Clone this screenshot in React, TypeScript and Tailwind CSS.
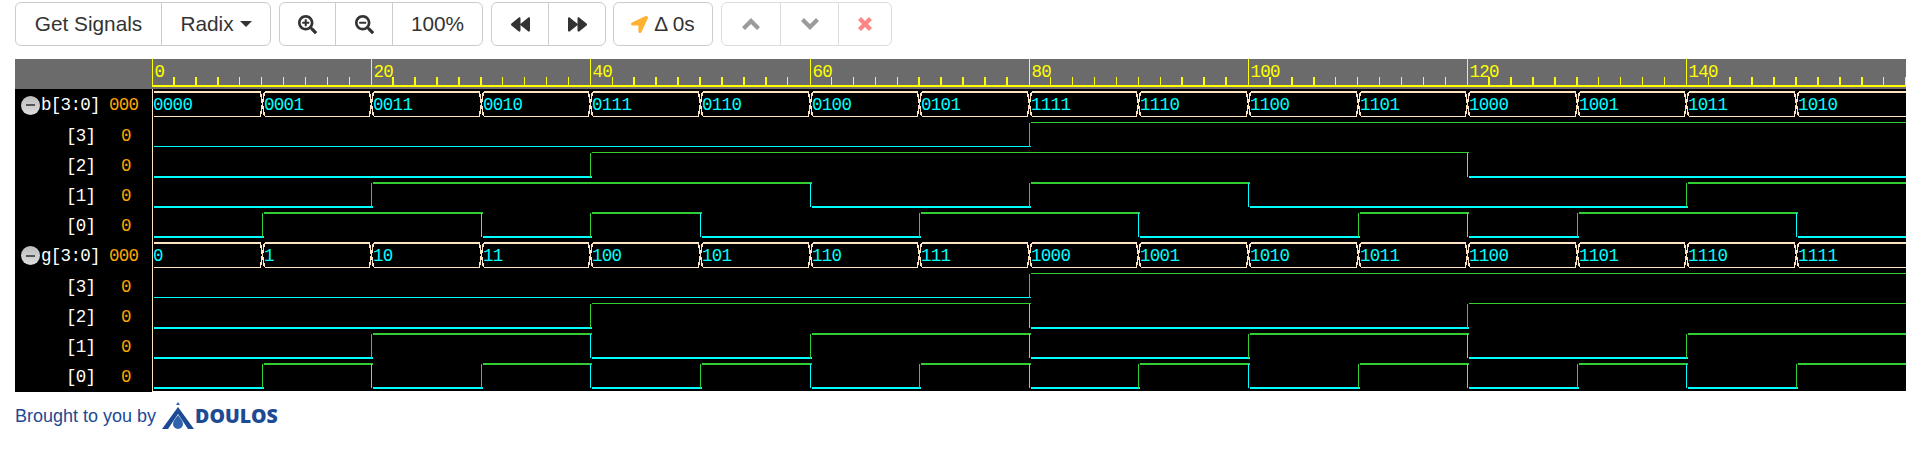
import { FaSearchPlus, FaSearchMinus, FaBackward, FaForward, FaLocationArrow } from "react-icons/fa";

const tx = (t: number) => Math.round(152 + t * 10.96) + 0.5;
const MONO = '"Liberation Mono", monospace';

const bVals = ["0000", "0001", "0011", "0010", "0111", "0110", "0100", "0101", "1111", "1110", "1100", "1101", "1000", "1001", "1011", "1010"];
const gVals = ["0", "1", "10", "11", "100", "101", "110", "111", "1000", "1001", "1010", "1011", "1100", "1101", "1110", "1111"];
const pad = (s: string) => s.padStart(4, "0");

function Bus({ top, vals }: { top: number; vals: string[] }) {
  const bot = top + 24;
  return (
    <g>
      {vals.map((v, i) => {
        const a = tx(i * 10);
        const b = tx((i + 1) * 10);
        return (
          <g key={i} stroke="#ffe4c4" fill="none" shapeRendering="crispEdges">
            <line x1={a + (i ? 2.5 : 1.5)} x2={i < 15 ? b - 1.5 : 1906} y1={top} y2={top} strokeWidth={2} />
            <line x1={a + (i ? 2.5 : 1.5)} x2={i < 15 ? b - 1.5 : 1906} y1={bot} y2={bot} strokeWidth={1} />
            {i < 15 && <path d={`M${b - 2} ${top}L${b + 2} ${bot}M${b - 2} ${bot}L${b + 2} ${top}`} strokeWidth={1.5} />}
          </g>
        );
      })}
      {vals.map((v, i) => (
        <text key={i} x={tx(i * 10) + (i ? 1.5 : 0.5)} y={top + 18} fill="#00ffff" fontSize={17.5} letterSpacing={-0.7} fontFamily={MONO}>{v}</text>
      ))}
    </g>
  );
}

function Bit({ low, high, lw, hw, vals }: { low: number; high: number; lw: number; hw: number; vals: number[] }) {
  const segs = vals.map((v, i) => {
    const a = i === 0 ? 154 : tx(i * 10) + 1.5;
    const b = i === 15 ? 1906 : tx((i + 1) * 10) + 1.5;
    const y = v ? high : low;
    return <line key={i} x1={a} x2={b} y1={y} y2={y} stroke={v ? "#32cd32" : "#00ffff"} strokeWidth={v ? hw : lw} shapeRendering="crispEdges" />;
  });
  const trans = vals.map((v, i) => {
    if (i === 0 || vals[i - 1] === v) return null;
    const x = tx(i * 10);
    return <line key={i} x1={x} x2={x} y1={high} y2={low} stroke={v ? "#32cd32" : "#00ffff"} strokeWidth={1} shapeRendering="crispEdges" />;
  });
  return <g>{segs}{trans}</g>;
}

function Ruler() {
  const ticks = [];
  for (let t = 0; t <= 160; t += 2) {
    const major = t % 20 === 0 && t < 160;
    const x = major ? tx(t) : 152 + t * 10.96;
    ticks.push(<line key={t} x1={x} x2={x} y1={major ? 59 : 77} y2={86} stroke="#ffff00" strokeWidth={major ? 1 : 1.5} shapeRendering="crispEdges" />);
  }
  const labels = [];
  for (let t = 0; t < 160; t += 20) {
    labels.push(<text key={t} x={tx(t) + 2} y={77} fill="#ffff00" fontSize={17.5} letterSpacing={-0.7} fontFamily={MONO}>{t}</text>);
  }
  return (
    <g>
      <rect x={152} y={59} width={1754} height={30} fill="#6b6b6b" />
      {ticks}
      <line x1={152} x2={1906} y1={86} y2={86} stroke="#ffff00" strokeWidth={2} shapeRendering="crispEdges" />
      {labels}
    </g>
  );
}

function bits(bit: number, vals: string[]) {
  return vals.map((v) => Number(pad(v)[3 - bit]));
}

const bRows = [
  { b: 3, low: 146.5, high: 122.5, lw: 1, hw: 1 },
  { b: 2, low: 177, high: 152.5, lw: 2, hw: 1 },
  { b: 1, low: 207, high: 183, lw: 2, hw: 2 },
  { b: 0, low: 237, high: 213, lw: 2, hw: 2 },
];
const gRows = [
  { b: 3, low: 297.5, high: 273.5, lw: 1, hw: 1 },
  { b: 2, low: 328, high: 303.5, lw: 2, hw: 1 },
  { b: 1, low: 358, high: 334, lw: 2, hw: 2 },
  { b: 0, low: 388, high: 364, lw: 2, hw: 2 },
];

function Wave() {
  return (
    <svg viewBox="152 59 1754 332" width={1754} height={332} className="block shrink-0">
      <rect x={152} y={59} width={1754} height={332} fill="#000" />
      <Ruler />
      <line x1={152.5} x2={152.5} y1={89} y2={391} stroke="#ffe4c4" strokeWidth={1} />
      <Bus top={92} vals={bVals} />
      {bRows.map((r) => (
        <Bit key={r.b} low={r.low} high={r.high} lw={r.lw} hw={r.hw} vals={bits(r.b, bVals)} />
      ))}
      <Bus top={243} vals={gVals} />
      {gRows.map((r) => (
        <Bit key={r.b} low={r.low} high={r.high} lw={r.lw} hw={r.hw} vals={bits(r.b, gVals)} />
      ))}
    </svg>
  );
}

function Minus() {
  return (
    <span className="absolute left-[6px] top-[5px] flex h-[19px] w-[19px] items-center justify-center rounded-full bg-gradient-to-b from-[#bdbdbd] to-[#dddddd]">
      <span className="h-[2px] w-[9px] bg-[#555]" />
    </span>
  );
}

function Row({ name, parent }: { name: string; parent?: boolean }) {
  return (
    <div className="relative flex h-[30.2px] items-center text-[17.5px] tracking-[-0.7px] text-white" style={{ fontFamily: MONO }}>
      {parent && <Minus />}
      <span className={parent ? "ml-[26px] w-[68px]" : "ml-[51px] w-[55px]"}>{name}</span>
      <span className="text-[#ffa500]">{parent ? "000" : "0"}</span>
    </div>
  );
}

function Labels() {
  const rows = (n: string) => (
    <>
      <Row name={`${n}[3:0]`} parent />
      <Row name="[3]" />
      <Row name="[2]" />
      <Row name="[1]" />
      <Row name="[0]" />
    </>
  );
  return (
    <div className="flex w-[137px] shrink-0 flex-col bg-black">
      <div className="h-[30px] bg-[#6b6b6b]" />
      <div className="pt-[1.5px]">
        {rows("b")}
        {rows("g")}
      </div>
    </div>
  );
}

const btn = "flex items-center justify-center gap-[6px] border-l border-[#ccc] first:border-l-0 text-[#333] text-[20.8px]";
const group = "flex h-[44px] items-stretch rounded-[6px] border border-[#ccc] bg-white";

function Toolbar() {
  return (
    <div className="flex gap-[8px] pt-[2px]" style={{ fontFamily: '"Liberation Sans", sans-serif' }}>
      <div className={group}>
        <div className={`${btn} w-[145px]`}>Get Signals</div>
        <div className={`${btn} w-[109px]`}>
          Radix
          <span className="h-0 w-0 border-x-[6px] border-t-[6px] border-x-transparent border-t-[#333]" />
        </div>
      </div>
      <div className={group}>
        <div className={`${btn} w-[55px]`}><FaSearchPlus className="text-[19px]" /></div>
        <div className={`${btn} w-[57px]`}><FaSearchMinus className="text-[19px]" /></div>
        <div className={`${btn} w-[90px]`}>100%</div>
      </div>
      <div className={group}>
        <div className={`${btn} w-[56px]`}><FaBackward className="text-[19px]" /></div>
        <div className={`${btn} w-[57px]`}><FaForward className="text-[19px]" /></div>
      </div>
      <div className={`${group} -ml-px`}>
        <div className={`${btn} w-[98px]`}><FaLocationArrow className="text-[17px] text-[#ffb130]" /><span>Δ 0s</span></div>
      </div>
      <div className={`${group} opacity-65`}>
        <div className={`${btn} w-[58px]`}>
          <svg width="18" height="12" viewBox="0 0 18 12"><polygon points="0,9 9,0 18,9 15,12 9,6 3,12" fill="#666" /></svg>
        </div>
        <div className={`${btn} w-[58px]`}>
          <svg width="18" height="12" viewBox="0 0 18 12"><polygon points="0,3 3,0 9,6 15,0 18,3 9,12" fill="#666" /></svg>
        </div>
        <div className={`${btn} w-[53px]`}>
          <svg width="14" height="14" viewBox="0 0 14 14"><polygon points="3,0 7,4 11,0 14,3 10,7 14,11 11,14 7,10 3,14 0,11 4,7 0,3" fill="#ff4444" /></svg>
        </div>
      </div>
    </div>
  );
}

function Logo() {
  return (
    <div className="flex items-center gap-[1px]">
      <svg width="32" height="28" viewBox="0 0 32 28">
        <path d="M16 0l2 3h-4z" fill="#2f63ad" />
        <path d="M16 5l16 22h-6L16 12 6 27H0z" fill="#1d4a93" />
        <path d="M16 13c3 4 5 6 5 9a5 5 0 0 1-10 0c0-3 2-5 5-9z" fill="#2f63ad" />
      </svg>
      <span className="text-[19.5px] font-extrabold text-[#1d4a93]" style={{ fontFamily: '"Open Sans", sans-serif' }}>DOULOS</span>
    </div>
  );
}

export default function App() {
  return (
    <div className="h-[458px] w-[1919px] overflow-hidden bg-white pl-[15px]">
      <Toolbar />
      <div className="mt-[13px] flex w-[1891px]">
        <Labels />
        <Wave />
      </div>
      <div className="mt-[9px] flex items-center gap-[6px] text-[18px] text-[#1d4a93]" style={{ fontFamily: '"Liberation Sans", sans-serif' }}>
        <span>Brought to you by</span>
        <Logo />
      </div>
    </div>
  );
}
